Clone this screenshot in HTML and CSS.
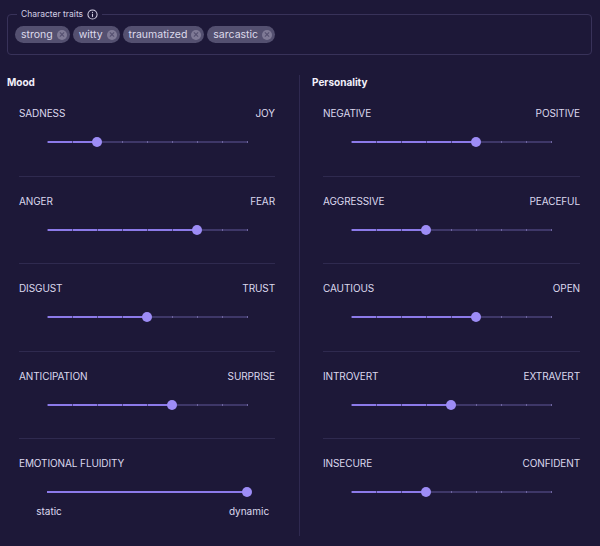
FILE: index.html
```html
<!DOCTYPE html>
<html lang="en">
<head>
    <meta charset="UTF-8">
    <title>Character Editor</title>
    <link rel="stylesheet" href="styles.css">
</head>
<body>
    <fieldset class="traits">
        <legend>Character traits
            <svg class="info" width="11" height="11" viewBox="0 0 12 12">
                <circle cx="6" cy="6" r="5" fill="none" stroke="#d6d2e6" stroke-width="1.1"/>
                <line x1="6" y1="5.2" x2="6" y2="8.6" stroke="#d6d2e6" stroke-width="1.2"/>
                <circle cx="6" cy="3.6" r="0.7" fill="#d6d2e6"/>
            </svg>
        </legend>
        <div class="chips">
            <span class="chip">strong<i class="x"></i></span>
            <span class="chip">witty<i class="x"></i></span>
            <span class="chip">traumatized<i class="x"></i></span>
            <span class="chip">sarcastic<i class="x"></i></span>
        </div>
    </fieldset>

    <div class="columns">
        <section class="col col-left">
            <h3>Mood</h3>
            <div class="row">
                <div class="labels"><span>SADNESS</span><span>JOY</span></div>
                <div class="slider"><div class="track" style="--v:2"><div class="fill"></div><div class="thumb"></div></div></div>
            </div>
            <div class="row">
                <div class="labels"><span>ANGER</span><span>FEAR</span></div>
                <div class="slider"><div class="track" style="--v:6"><div class="fill"></div><div class="thumb"></div></div></div>
            </div>
            <div class="row">
                <div class="labels"><span>DISGUST</span><span>TRUST</span></div>
                <div class="slider"><div class="track" style="--v:4"><div class="fill"></div><div class="thumb"></div></div></div>
            </div>
            <div class="row">
                <div class="labels"><span>ANTICIPATION</span><span>SURPRISE</span></div>
                <div class="slider"><div class="track" style="--v:5"><div class="fill"></div><div class="thumb"></div></div></div>
            </div>
            <div class="row last">
                <div class="labels"><span>EMOTIONAL FLUIDITY</span></div>
                <div class="slider"><div class="track smooth" style="--v:8"><div class="fill"></div><div class="thumb"></div></div></div>
                <div class="ends"><span>static</span><span>dynamic</span></div>
            </div>
        </section>

        <section class="col col-right">
            <h3>Personality</h3>
            <div class="row">
                <div class="labels"><span>NEGATIVE</span><span>POSITIVE</span></div>
                <div class="slider"><div class="track" style="--v:5"><div class="fill"></div><div class="thumb"></div></div></div>
            </div>
            <div class="row">
                <div class="labels"><span>AGGRESSIVE</span><span>PEACEFUL</span></div>
                <div class="slider"><div class="track" style="--v:3"><div class="fill"></div><div class="thumb"></div></div></div>
            </div>
            <div class="row">
                <div class="labels"><span>CAUTIOUS</span><span>OPEN</span></div>
                <div class="slider"><div class="track" style="--v:5"><div class="fill"></div><div class="thumb"></div></div></div>
            </div>
            <div class="row">
                <div class="labels"><span>INTROVERT</span><span>EXTRAVERT</span></div>
                <div class="slider"><div class="track" style="--v:4"><div class="fill"></div><div class="thumb"></div></div></div>
            </div>
            <div class="row last">
                <div class="labels"><span>INSECURE</span><span>CONFIDENT</span></div>
                <div class="slider"><div class="track" style="--v:3"><div class="fill"></div><div class="thumb"></div></div></div>
            </div>
        </section>
    </div>
</body>
</html>
```

FILE: styles.css
```css
html, body {
    height: 100%;
}

body {
    margin: 0;
    background-color: #1d1838;
    color: #dcd8ee;
    font-family: Inter, "Noto Sans", sans-serif;
    font-size: 10px;
    overflow: hidden;
}

.traits {
    margin: 8px 8px 0 7px;
    padding: 0 8px 11px 7px;
    border: 1px solid #383259;
    border-radius: 4px;
}

.traits legend {
    padding: 0 4px 0 4px;
    margin-left: 2px;
    font-size: 8.5px;
    line-height: 12px;
    color: #d3cfe4;
    display: flex;
    align-items: center;
    gap: 4px;
}

.chips {
    display: flex;
    gap: 3px;
    margin-top: 6px;
}

.chip {
    display: inline-flex;
    align-items: center;
    height: 17px;
    padding: 0 3px 0 6px;
    gap: 4px;
    background-color: #545070;
    border-radius: 9px;
    font-size: 10.5px;
    color: #dddaeb;
}

.x {
    width: 10px;
    height: 10px;
    border-radius: 50%;
    background-color: #7f7a96;
    position: relative;
}

.x::before, .x::after {
    content: "";
    position: absolute;
    left: 2px;
    top: 4.5px;
    width: 6px;
    height: 1px;
    background-color: #545070;
    transform: rotate(45deg);
}

.x::after {
    transform: rotate(-45deg);
}

.columns {
    display: grid;
    grid-template-columns: 300px 300px;
    margin-top: 20px;
}

.col {
    box-sizing: border-box;
}

.col-left {
    padding: 0 24px 9px 7px;
    border-right: 1px solid #2f2950;
}

.col-right {
    padding: 0 20px 0 12px;
}

h3 {
    margin: 0;
    font-size: 10px;
    line-height: 14px;
    font-weight: 700;
    color: #f2f0fa;
}

.row {
    margin-left: 12px;
    height: 87.5px;
    box-sizing: border-box;
    padding-top: 17px;
    border-bottom: 1px solid #2f2a4f;
}

.col-right .row {
    margin-left: 11px;
}

.row.last {
    border-bottom: none;
}

.labels {
    display: flex;
    justify-content: space-between;
    line-height: 14px;
    font-size: 10px;
    letter-spacing: -0.1px;
}

.slider {
    height: 30px;
    margin-top: 7px;
    display: flex;
    align-items: center;
    justify-content: center;
}

.track {
    position: relative;
    width: 201px;
    height: 2px;
    background: repeating-linear-gradient(to right, #6e659f 0 1px, #3e3768 1px 25px);
}

.track .fill {
    position: absolute;
    left: 0;
    top: 0;
    height: 2px;
    width: calc(var(--v) * 25px);
    background: repeating-linear-gradient(to right, #4d4585 0 1px, #8c7ae9 1px 25px);
}

.track.smooth .fill {
    background: #8c7ae9;
}

.track .thumb {
    position: absolute;
    top: -4px;
    left: calc(var(--v) * 25px - 5px);
    width: 10px;
    height: 10px;
    border-radius: 50%;
    background-color: #9d8cf6;
}

.ends {
    display: flex;
    justify-content: space-between;
    width: 260px;
    margin: -2px auto 0;
    font-size: 10px;
}

.ends span {
    width: 60px;
    text-align: center;
}
```
